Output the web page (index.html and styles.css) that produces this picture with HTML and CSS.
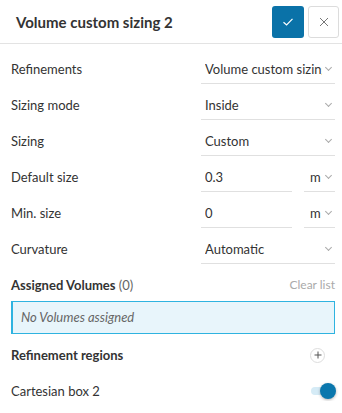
FILE: index.html
```html
<!DOCTYPE html>
<html lang="en">
<head>
    <meta charset="UTF-8">
    <title>Volume custom sizing 2</title>
    <link rel="stylesheet" href="styles.css">
</head>
<body>

<div class="panel">
    <div class="panel-header">
        <h2 class="panel-title">Volume custom sizing 2</h2>
        <button class="icon-btn confirm-btn">
            <svg width="12" height="10" viewBox="0 0 12 10"><path d="M1.5 5.2 L4.6 8 L10.5 1.8" fill="none" stroke="#fff" stroke-width="1.2"/></svg>
        </button>
        <button class="icon-btn close-btn">
            <svg width="10" height="10" viewBox="0 0 10 10"><path d="M1 1 L9 9 M9 1 L1 9" fill="none" stroke="#777" stroke-width="1"/></svg>
        </button>
    </div>

    <div class="form">
        <div class="form-row">
            <span class="label">Refinements</span>
            <div class="select wide"><span class="value clip">Volume custom sizing 2</span><span class="chevron"></span></div>
        </div>
        <div class="form-row">
            <span class="label">Sizing mode</span>
            <div class="select wide"><span class="value">Inside</span><span class="chevron"></span></div>
        </div>
        <div class="form-row">
            <span class="label">Sizing</span>
            <div class="select wide"><span class="value">Custom</span><span class="chevron"></span></div>
        </div>
        <div class="form-row">
            <span class="label">Default size</span>
            <div class="combo">
                <div class="select input"><span class="value">0.3</span></div>
                <div class="select unit"><span class="value">m</span><span class="chevron"></span></div>
            </div>
        </div>
        <div class="form-row">
            <span class="label">Min. size</span>
            <div class="combo">
                <div class="select input"><span class="value">0</span></div>
                <div class="select unit"><span class="value">m</span><span class="chevron"></span></div>
            </div>
        </div>
        <div class="form-row">
            <span class="label">Curvature</span>
            <div class="select wide"><span class="value">Automatic</span><span class="chevron"></span></div>
        </div>
    </div>

    <div class="section-head assigned">
        <span><b>Assigned Volumes</b> <span class="count">(0)</span></span>
        <span class="clear">Clear list</span>
    </div>
    <div class="assign-box">No Volumes assigned</div>

    <div class="section-head regions">
        <b>Refinement regions</b>
        <span class="add-btn">
            <svg width="8" height="8" viewBox="0 0 8 8"><path d="M4 0.5 V7.5 M0.5 4 H7.5" stroke="#555" stroke-width="1"/></svg>
        </span>
    </div>
    <div class="region-row">
        <span>Cartesian box 2</span>
        <span class="toggle"><span class="knob"></span></span>
    </div>
</div>

</body>
</html>
```

FILE: styles.css
```css
body {
    margin: 0;
    background-color: #ffffff;
    font-family: Lato, "Open Sans", sans-serif;
    color: #333;
    font-size: 13px;
}
.panel {
    width: 342px;
}
.panel-header {
    display: flex;
    align-items: center;
    height: 43px;
    border-bottom: 1px solid #e3e3e3;
    padding: 0 3px 0 16px;
    box-sizing: content-box;
}
.panel-title {
    flex: 1;
    margin: 0;
    font-size: 15px;
    font-weight: bold;
    color: #333;
}
.icon-btn {
    width: 32px;
    height: 32px;
    border-radius: 3px;
    display: flex;
    align-items: center;
    justify-content: center;
    padding: 0;
    margin-left: 4px;
    cursor: pointer;
}
.confirm-btn {
    background-color: #0a72a8;
    border: none;
}
.close-btn {
    background-color: #fff;
    border: 1px solid #dcdcdc;
    width: 31px;
}
.form {
    padding: 10px 7px 0 11px;
}
.form-row {
    display: flex;
    justify-content: space-between;
    height: 36px;
}
.label {
    line-height: 30px;
}
.select {
    display: flex;
    align-items: center;
    height: 30px;
    border-bottom: 1px solid #e0e0e0;
    box-sizing: border-box;
    padding: 0 2px 0 4px;
}
.select.wide {
    width: 134px;
}
.value {
    flex: 1;
    white-space: nowrap;
    overflow: hidden;
}
.value.clip {
    text-overflow: clip;
}
.chevron {
    width: 4px;
    height: 4px;
    border-right: 1px solid #aaa;
    border-bottom: 1px solid #aaa;
    transform: rotate(45deg);
    margin: 0 2px 3px 4px;
}
.combo {
    display: flex;
    gap: 12px;
}
.select.input {
    width: 91px;
}
.select.unit {
    width: 31px;
    padding-left: 6px;
}
.section-head {
    display: flex;
    justify-content: space-between;
    align-items: center;
    line-height: 20px;
    padding: 0 7px 0 11px;
}
.section-head b {
    font-weight: bold;
}
.assigned {
    margin-top: 5px;
}
.count {
    color: #666;
}
.clear {
    font-size: 12px;
    color: #aaa;
}
.assign-box {
    margin: 6px 7px 0 11px;
    height: 33px;
    box-sizing: border-box;
    border: 1px solid #2fb3e0;
    border-left-width: 2px;
    background-color: #e8f5fb;
    color: #666;
    font-style: italic;
    line-height: 31px;
    padding-left: 8px;
}
.regions {
    margin-top: 11px;
    padding-right: 17px;
}
.add-btn {
    width: 13px;
    height: 13px;
    border: 1px solid #ddd;
    border-radius: 50%;
    display: flex;
    align-items: center;
    justify-content: center;
}
.region-row {
    display: flex;
    justify-content: space-between;
    align-items: center;
    margin-top: 16px;
    line-height: 20px;
    padding: 0 7px 0 11px;
}
.toggle {
    position: relative;
    width: 20px;
    height: 8px;
    border-radius: 4px;
    background-color: #d5ebf6;
    margin-right: 4px;
}
.knob {
    position: absolute;
    right: -5px;
    top: -4px;
    width: 16px;
    height: 16px;
    border-radius: 50%;
    background-color: #0a77ad;
    box-shadow: 0 1px 3px rgba(0, 0, 0, 0.3);
}
```
